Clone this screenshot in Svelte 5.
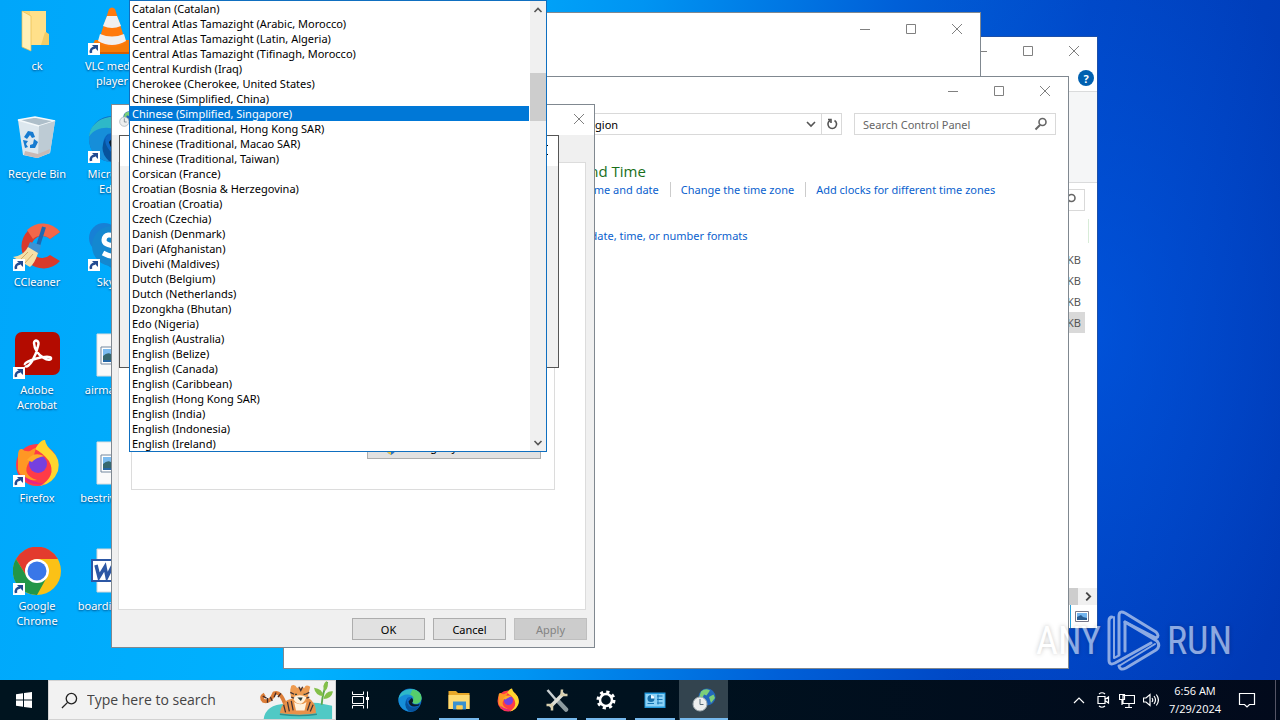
<script>
	const languages = [
		'Catalan (Catalan)',
		'Central Atlas Tamazight (Arabic, Morocco)',
		'Central Atlas Tamazight (Latin, Algeria)',
		'Central Atlas Tamazight (Tifinagh, Morocco)',
		'Central Kurdish (Iraq)',
		'Cherokee (Cherokee, United States)',
		'Chinese (Simplified, China)',
		'Chinese (Simplified, Singapore)',
		'Chinese (Traditional, Hong Kong SAR)',
		'Chinese (Traditional, Macao SAR)',
		'Chinese (Traditional, Taiwan)',
		'Corsican (France)',
		'Croatian (Bosnia & Herzegovina)',
		'Croatian (Croatia)',
		'Czech (Czechia)',
		'Danish (Denmark)',
		'Dari (Afghanistan)',
		'Divehi (Maldives)',
		'Dutch (Belgium)',
		'Dutch (Netherlands)',
		'Dzongkha (Bhutan)',
		'Edo (Nigeria)',
		'English (Australia)',
		'English (Belize)',
		'English (Canada)',
		'English (Caribbean)',
		'English (Hong Kong SAR)',
		'English (India)',
		'English (Indonesia)',
		'English (Ireland)',
	];

	// desktop columns, top to bottom
	const shortcuts = [
		{ icon: 'folder', label: 'ck' },
		{ icon: 'bin', label: 'Recycle Bin' },
		{ icon: 'ccleaner', label: 'CCleaner', link: true },
		{ icon: 'acrobat', label: 'Adobe Acrobat', link: true },
		{ icon: 'firefox', label: 'Firefox', link: true },
		{ icon: 'chrome', label: 'Google Chrome', link: true },
		{ icon: 'vlc', label: 'VLC media player', link: true },
		{ icon: 'edge', label: 'Microsoft Edge', link: true },
		{ icon: 'skype', label: 'Skype', link: true },
		{ icon: 'image', label: 'airmay.jpg' },
		{ icon: 'image', label: 'bestriver.jpg' },
		{ icon: 'word', label: 'boardinga.rtf' },
	];

	const tasks = [
		{ icon: 'taskview', label: 'Task View' },
		{ icon: 'edge', label: 'Microsoft Edge' },
		{ icon: 'explorer', label: 'File Explorer', open: true },
		{ icon: 'firefox', label: 'Firefox' },
		{ icon: 'tools', label: 'Tools', open: true },
		{ icon: 'gear', label: 'Settings', open: true },
		{ icon: 'panel', label: 'Control Panel', open: true },
		{ icon: 'region', label: 'Region', open: true, active: true },
	];

	const fileSizes = ['KB', 'KB', 'KB', 'KB'];

	let selected = $state('Chinese (Simplified, Singapore)');
	let panelSearch = $state('');
	let taskSearch = $state('');
</script>

{#snippet glyph(name)}
	<svg class="glyph" viewBox="0 0 48 48" aria-hidden="true">
		{#if name === 'folder'}
			<path d="M9 4H33V25L36 28V38H9Z" fill="#f8d775" />
			<path d="M17 4H33V38H17Z" fill="#ffe08a" />
			<path d="M32 25L36 27V38H28Z" fill="#f1cc66" />
			<path d="M9 4L18 9V44L9 40Z" fill="#fff0b8" stroke="#e6bb4d" stroke-width=".7" />
		{:else if name === 'bin'}
			<path d="M5 5L22 2L42 6L37 38L24 43L10 40Z" fill="#dce7ee" />
			<path d="M5 5L22 2L42 6L26 11Z" fill="#aebfca" stroke="#f5fafc" stroke-width="1.5" />
			<path d="M26 11L42 6L37 38L25 43Z" fill="#bdcbd4" />
			<path d="M12 36L25 39L37 34L36 38L24 43L11 40Z" fill="#c8b9b5" />
			<path d="M11 22L15 16L20 17L22 22L19 23L17 20L14 24Z" fill="#167bd0" />
			<path d="M21 24L25 27L22 33H17V30L20 29Z" fill="#167bd0" />
			<path d="M10 25L15 26L13 29L15 32L12 33Z" fill="#167bd0" />
		{:else if name === 'ccleaner'}
			<path d="M47 9A22 22 0 1 0 47 38L37 32A11 11 0 1 1 37 16Z" fill="#d93a2b" />
			<path d="M47 9A22 22 0 0 0 14 7L20 16A13 13 0 0 1 37 16Z" fill="#f26749" />
			<path d="M31 4L25 23" stroke="#1e68b1" stroke-width="4" />
			<path d="M17 19L28 22L26 31L14 26Z" fill="#3d92d4" />
			<path d="M15 24L25 30Q22 40 17 44L0 34Q10 33 15 24Z" fill="#f6dfa7" />
			<path d="M15 29L7 37M20 31L12 40" stroke="#d4ad66" />
		{:else if name === 'acrobat'}
			<rect x="2" y="1" width="45" height="43" rx="7" fill="#b30b00" />
			<path d="M12 34C10 30 36 23 38 27C39 32 22 26 21 12C21 8 27 9 25 15C23 25 16 38 12 35" fill="none" stroke="#fff" stroke-width="2.5" />
		{:else if name === 'firefox'}
			<circle cx="24" cy="26" r="21" fill="#ff3b47" />
			<path d="M22 10Q28 0 32 1Q33 7 39 12Q48 20 45 32Q40 45 27 47Q44 37 36 22Q30 14 22 10Z" fill="#ffd52e" />
			<path d="M5 17Q5 9 9 10Q12 13 17 12Q21 9 23 9L21 16L29 19Q22 24 16 23Q8 36 24 41Q9 43 5 31Z" fill="#ff9724" />
			<circle cx="25" cy="25" r="9" fill="#7540df" />
			<path d="M14 21Q21 12 31 17Q22 19 19 23Z" fill="#ffad29" />
			<path d="M8 35Q15 48 32 45Q18 43 8 35Z" fill="#e62386" />
		{:else if name === 'chrome'}
			<circle cx="24" cy="24" r="24" fill="#fbc116" />
			<path d="M3 12A24 24 0 0 1 45 12H24A12 12 0 0 0 14 30Z" fill="#e33b2e" />
			<path d="M3 12A24 24 0 0 0 24 48L34 30A12 12 0 0 1 14 30Z" fill="#229648" />
			<circle cx="24" cy="24" r="12" fill="#fff" />
			<circle cx="24" cy="24" r="9.5" fill="#3977e8" />
		{:else if name === 'vlc'}
			<path d="M7 33H42L47 45H1Z" fill="#f57b08" />
			<path d="M1 45H47V47H1Z" fill="#d65e00" />
			<path d="M21 2Q24-1 27 2L38 36Q24 44 10 36Z" fill="#ff7a0c" />
			<path d="M19 9H29L33 19Q24 23 15 19Z" fill="#f0f0f0" />
			<path d="M12 27Q24 32 36 27L38 34Q24 42 10 34Z" fill="#f0f0f0" />
		{:else if name === 'edge'}
			<circle cx="24" cy="24" r="23" fill="#0d69c5" />
			<path d="M1 22C3-4 47-5 47 20C47 30 35 35 29 29C38 20 20 8 1 22Z" fill="#2eb8c8" />
			<path d="M29 3Q47 6 47 20C47 30 35 35 29 29Q34 19 24 14Z" fill="#56ce6c" />
			<path d="M1 22C8 10 29 10 32 21C23 13 11 22 17 35Q22 46 38 43Q24 52 10 42Q0 34 1 22Z" fill="#168ed9" />
			<path d="M21 18Q13 25 22 36Q29 42 43 36Q34 52 21 46Q8 34 21 18Z" fill="#07539d" />
			<path d="M27 20Q33 24 28 30Q32 35 43 32L42 35Q24 42 21 27Z" fill="#0b1b2a" />
		{:else if name === 'skype'}
			<circle cx="16" cy="15" r="15" fill="#1780d5" />
			<circle cx="31" cy="31" r="16" fill="#078bd2" />
			<circle cx="24" cy="23" r="20" fill="#1488d0" />
			<path d="M31 15Q17 8 16 17C16 25 32 20 31 29Q28 37 15 30" fill="none" stroke="#fff" stroke-width="5" />
		{:else if name === 'image'}
			<path d="M9 3H40V45H9Z" fill="#fafafa" stroke="#ddd" />
			<path d="M13 16H36V33H13Z" fill="#fff" stroke="#73879d" />
			<path d="M15 18H34V31H15Z" fill="#7bbcf0" />
			<path d="M15 25Q21 19 26 26Q29 23 34 26V31H15Z" fill="#35686f" />
			<path d="M15 29H34V31H15Z" fill="#2466a5" />
		{:else if name === 'word'}
			<path d="M9 2H40V45H9Z" fill="#fff" stroke="#d6d6d6" />
			<path d="M4 13H27V34H4Z" fill="#fff" stroke="#2c57a4" stroke-width="2" />
			<path d="M8 18L11 30L17 20L19 30L25 18" fill="none" stroke="#2c57a4" stroke-width="3.5" />
			<path d="M29 17H37M29 23H37M29 29H37" stroke="#779ac8" />
		{:else if name === 'taskview'}
			<g fill="none" stroke="#fff" stroke-width="2">
				<path d="M7 7V13H29V7M7 41V35H29V41M7 17H29V31H7Z" />
				<path d="M37 7V41" />
			</g>
			<path d="M34 18H40V24H34Z" fill="#fff" />
		{:else if name === 'explorer'}
			<path d="M3 6H18L22 10H45V42H3Z" fill="#e8a829" />
			<path d="M3 14H45V42H3Z" fill="#ffdb72" />
			<path d="M12 27H38V43H31V35H19V43H12Z" fill="#3a91cf" />
			<path d="M19 35H31V43H19Z" fill="#ffcf50" />
		{:else if name === 'tools'}
			<path d="M5 4L24 26" stroke="#c8d0d2" stroke-width="5" />
			<path d="M26 26L42 43" stroke="#8d9b9f" stroke-width="9" stroke-linecap="round" />
			<path d="M10 38L38 10" stroke="#dedfd7" stroke-width="7" />
			<path d="M34 3L33 14L45 14M3 34L14 34L14 45" fill="none" stroke="#d8cfae" stroke-width="5" />
		{:else if name === 'gear'}
			<circle cx="24" cy="24" r="16" fill="none" stroke="#fff" stroke-width="6" stroke-dasharray="6.3 6.27" />
			<circle cx="24" cy="24" r="12" fill="none" stroke="#fff" stroke-width="5" />
		{:else if name === 'panel'}
			<path d="M3 9H45V40H3Z" fill="#2299dc" />
			<path d="M5 12H43V37H5Z" fill="#8dd2f6" />
			<circle cx="16" cy="21" r="7" fill="#176ea7" />
			<path d="M16 21V14A7 7 0 0 1 23 21Z" fill="#f5fbff" />
			<path d="M28 16H39M28 23H39M28 30H39M30 13V33M9 31H22" stroke="#1274b4" stroke-width="2" />
		{:else if name === 'region'}
			<circle cx="30" cy="18" r="17" fill="#2367ba" />
			<path d="M18 7Q27-1 36 5L29 15L24 13L20 22L14 19ZM34 18L43 13L46 20L38 30Z" fill="#7ccf79" />
			<circle cx="16" cy="32" r="14" fill="#eceeee" stroke="#9fa9af" stroke-width="2" />
			<path d="M16 22V33H23" fill="none" stroke="#596c79" stroke-width="2" />
		{/if}
	</svg>
{/snippet}

{#snippet magnifier()}
	<svg class="magnifier" viewBox="0 0 14 14" aria-hidden="true">
		<circle cx="8.5" cy="5" r="3.5" fill="none" stroke="currentColor" stroke-width="1.6" />
		<path d="M6 8L1.5 12.5" stroke="currentColor" stroke-width="2" />
	</svg>
{/snippet}

{#snippet caption(closeOnly)}
	<div class="caption">
		{#if !closeOnly}
			<button aria-label="Minimize"><svg viewBox="0 0 12 12"><path d="M1 6.5H11" /></svg></button>
			<button aria-label="Maximize"><svg viewBox="0 0 12 12"><path d="M1.5 1.5H10.5V10.5H1.5Z" /></svg></button>
		{/if}
		<button aria-label="Close"><svg viewBox="0 0 12 12"><path d="M1 1L11 11M11 1L1 11" /></svg></button>
	</div>
{/snippet}

<div class="screen">
	<main class="desktop">
		<div class="shortcuts">
			{#each shortcuts as item}
				<button class="shortcut">
					<span class="picture">
						{@render glyph(item.icon)}
						{#if item.link}
							<svg class="arrow" viewBox="0 0 12 12" aria-hidden="true">
								<path d="M0 0H12V12H0Z" fill="#fff" />
								<path d="M3 10Q2 5 7 4.5" fill="none" stroke="#234b91" stroke-width="2.5" />
								<path d="M4 2H10V8Z" fill="#234b91" />
							</svg>
						{/if}
					</span>
					<span>{item.label}</span>
				</button>
			{/each}
		</div>

		<section class="window explorer" aria-label="File Explorer">
			{@render caption(false)}
			<div class="ribbon-tabs">
				<button class="help" aria-label="Help">?</button>
			</div>
			<div class="ribbon"></div>
			<div class="explorer-search">
				<div class="field">{@render magnifier()}</div>
			</div>
			<div class="column-edge"></div>
			<table>
				<tbody>
					{#each fileSizes as size, i}
						<tr class:chosen={i === 3}><td>{size}</td></tr>
					{/each}
				</tbody>
			</table>
			<div class="hscroll">
				<div class="hthumb"></div>
				<svg viewBox="0 0 8 8" aria-hidden="true"><path d="M2 0.5L5.5 4L2 7.5" /></svg>
			</div>
			<div class="status">
				<button aria-label="Large icons">
					<svg viewBox="0 0 14 11" aria-hidden="true">
						<path d="M.5 .5H13.5V10.5H.5Z" fill="#fff" stroke="#778" />
						<path d="M2 2H12V9H2Z" fill="#72b4ee" />
						<path d="M2 6L6 4L8 6L12 7V9H2Z" fill="#285b90" />
					</svg>
				</button>
			</div>
		</section>

		<section class="window document" aria-label="Document">
			{@render caption(false)}
		</section>

		<section class="window panel" aria-label="Clock and Region">
			{@render caption(false)}
			<div class="address">
				<nav class="field crumbs" aria-label="Address">
					<span>Clock and Region</span>
					<button aria-label="Previous locations">
						<svg class="line" viewBox="0 0 12 12"><path d="M2 4L6 8L10 4" /></svg>
					</button>
					<button class="refresh" aria-label="Refresh">
						<svg class="line" viewBox="0 0 12 12"><path d="M4 2.5A4.3 4.3 0 1 0 8.5 2.5M2 1.5H5V5" /></svg>
					</button>
				</nav>
				<label class="field search">
					<input aria-label="Search Control Panel" placeholder="Search Control Panel" bind:value={panelSearch} />
					{@render magnifier()}
				</label>
			</div>
			<div class="links">
				<h2>Date and Time</h2>
				<div class="row">
					<a href="#time">Set the time and date</a>
					<a href="#zone">Change the time zone</a>
					<a href="#clocks">Add clocks for different time zones</a>
				</div>
				<div class="row region-row">
					<a href="#formats">Change date, time, or number formats</a>
				</div>
			</div>
		</section>

		<section class="window region" aria-label="Region">
			<header>
				<span class="title-icon">{@render glyph('region')}</span>
				{@render caption(true)}
			</header>
			<div class="page">
				<div class="group">
					<button class="push locale">
						<svg viewBox="0 0 14 16" aria-hidden="true">
							<path d="M7 0L13 3V8Q12 13 7 16Q2 13 1 8V3Z" fill="#2f75c2" />
							<path d="M7 0L13 3V8H7Z" fill="#f3c83c" />
							<path d="M1 8H7V16Q2 13 1 8Z" fill="#f3c83c" />
						</svg>
						Change system locale...
					</button>
				</div>
			</div>
			<footer>
				<button class="push">OK</button>
				<button class="push">Cancel</button>
				<button class="push" disabled>Apply</button>
			</footer>
		</section>

		<section class="window settings" aria-label="Region Settings">
			<header>{@render caption(true)}</header>
		</section>

		<div class="popup">
			<select size="30" aria-label="Current system locale" bind:value={selected}>
				{#each languages as language}
					<option value={language}>{language}</option>
				{/each}
			</select>
			<div class="scrollbar">
				<svg class="line" viewBox="0 0 12 12" aria-hidden="true"><path d="M2.5 8L6 4.5L9.5 8" /></svg>
				<div class="track"><div class="thumb"></div></div>
				<svg class="line" viewBox="0 0 12 12" aria-hidden="true"><path d="M2.5 4L6 7.5L9.5 4" /></svg>
			</div>
		</div>

		<div class="watermark">
			<span>ANY</span>
			<svg viewBox="0 0 54 62" aria-hidden="true">
				<g fill="none" stroke="#fff" stroke-linejoin="round" stroke-linecap="round">
					<path d="M5 7Q2 7 2 11V50Q2 56 8 53L44 33" stroke-width="3" />
					<path d="M7 7V48L11 46" stroke-width="2" />
					<path d="M12 45V6Q12 0 18 3L49 22Q53 26 49 28L18 12V41" stroke-width="3" />
					<path d="M12 56Q13 61 19 58L49 40Q54 36 50 31L18 12" stroke-width="3" />
					<path d="M12 56L48 34" stroke-width="2" />
				</g>
			</svg>
			<span>RUN</span>
		</div>
	</main>

	<footer class="taskbar">
		<button class="start" aria-label="Start">
			<svg viewBox="0 0 16 16"><path d="M0 2.3L7 1.3V7.5H0ZM8 1.1L16 0V7.5H8ZM0 8.5H7V14.7L0 13.7ZM8 8.5H16V16L8 14.9Z" fill="#fff" /></svg>
		</button>
		<label class="task-search">
			<svg class="lens" viewBox="0 0 18 18" aria-hidden="true">
				<circle cx="11" cy="7" r="5.5" /><path d="M7 11L1 17" />
			</svg>
			<input aria-label="Type here to search" placeholder="Type here to search" bind:value={taskSearch} />
			<svg class="tiger" viewBox="0 0 78 40" aria-hidden="true">
				<path d="M5 40Q7 25 28 24Q53 20 77 26V40Z" fill="#50c9c5" />
				<path d="M66 25Q67 12 72 1" fill="none" stroke="#5da84c" stroke-width="2" />
				<path d="M68 16Q59 15 58 7Q67 8 68 16ZM69 11Q66 4 71 0Q75 6 69 11ZM68 19Q70 10 78 11Q76 19 68 19Z" fill="#83bf49" />
				<path d="M28 26Q23 10 16 13Q12 23 5 21Q1 17 6 14" fill="none" stroke="#db7d38" stroke-width="4" />
				<path d="M23 13L20 17M18 12L16 17M12 17L14 21M9 18L9 23M4 16L8 18" stroke="#432b27" stroke-width="1.4" />
				<path d="M22 34Q25 17 39 19L52 18Q60 22 60 34Q44 37 22 34Z" fill="#e89149" />
				<path d="M33 9L34 5Q38 3 40 7L48 7Q49 3 54 6L52 14Q52 23 44 24Q33 23 33 12Z" fill="#ed9b50" />
				<path d="M36 17Q43 13 50 17Q47 24 43 24Q37 23 36 17Z" fill="#fff2df" />
				<path d="M37 22Q44 27 50 22L48 31H39Z" fill="#fff2df" />
				<path d="M42 6L44 10L46 6M33 12L37 14M53 12L49 14M34 17L37 18M53 17L50 18M26 25L28 33M30 22L32 32M34 21L36 31M54 22L51 31M57 25L54 32" fill="none" stroke="#403335" stroke-width="1.3" />
				<path d="M38 14H40M47 14H49M42 18H45L44 20Z" stroke="#263c3b" stroke-width="1.3" />
				<path d="M22 35Q43 38 61 35" fill="none" stroke="#2d8d8e" stroke-width="1.4" />
			</svg>
		</label>
		<nav class="tasks" aria-label="Running programs">
			{#each tasks as task}
				<button class:open={task.open} class:active={task.active} aria-label={task.label}>{@render glyph(task.icon)}</button>
			{/each}
		</nav>
		<div class="tray">
			<svg viewBox="0 0 16 16" aria-hidden="true"><path d="M3 11L8 6L13 11" /></svg>
			<svg viewBox="0 0 16 16" aria-hidden="true"><path d="M3 4.5H10V11.5H3ZM10 7.5L13.5 5V11L10 8.5M4 2Q7-.5 10 2M4 14Q7 16.5 10 14" /></svg>
			<svg viewBox="0 0 16 16" aria-hidden="true"><path d="M4 3.5H15.5V11.5H4ZM10 12V15M6 15.5H13M.5 2.5H5.5V7.5H.5ZM3 7.5V13" /></svg>
			<svg viewBox="0 0 16 16" aria-hidden="true"><path d="M.5 6H3L7 2.5V13.5L3 10H.5ZM9 6Q10.5 8 9 10M11 4Q14 8 11 12M13.3 2.5Q17.5 8 13.3 13.5" /></svg>
			<time>6:56 AM<br />7/29/2024</time>
			<svg class="notice" viewBox="0 0 18 18" aria-hidden="true"><path d="M1.5 2.5H16.5V13.5H11.5L9 16L6.5 13.5H1.5Z" /></svg>
		</div>
	</footer>
</div>

<style>
	:global(body) {
		margin: 0;
	}

	.screen {
		display: flex;
		flex-direction: column;
		height: 100vh;
		overflow: hidden;
		font-family: 'Noto Sans', 'Open Sans', sans-serif;
		font-size: 11px;
		line-height: 15px;
		color: #000;
	}

	.screen * {
		box-sizing: border-box;
	}

	button,
	input,
	select {
		margin: 0;
		padding: 0;
		border: 0;
		border-radius: 0;
		background: none;
		font: inherit;
		color: inherit;
	}

	svg {
		display: block;
		flex: none;
	}

	.desktop {
		position: relative;
		flex: 1;
		min-height: 0;
		overflow: hidden;
		background:
			radial-gradient(ellipse 260px 420px at 1090px 330px, rgba(0, 96, 240, 0.5), transparent),
			linear-gradient(100deg, #00a6fa 0%, #00b2ff 30%, #0094f2 46%, #0060d8 64%, #0046c4 78%, #0038b4 100%);
	}

	.shortcuts {
		display: grid;
		grid-template-rows: repeat(6, 108px);
		grid-auto-columns: 75px;
		grid-auto-flow: column;
		width: 150px;
	}

	.shortcut {
		display: flex;
		flex-direction: column;
		align-items: center;
		gap: 2px;
		padding: 7px 4px 0 3px;
		color: #fff;
		text-shadow: 0 1px 2px rgba(0, 40, 90, 0.8);
	}

	.picture {
		position: relative;
		width: 48px;
		height: 48px;
		margin-bottom: 1px;
	}

	.arrow {
		position: absolute;
		left: 0;
		bottom: 0;
		width: 12px;
		height: 12px;
	}

	.glyph {
		width: 100%;
		height: 100%;
	}

	.window {
		position: absolute;
		display: flex;
		flex-direction: column;
		border: 1px solid #808890;
		background: #fff;
	}

	.caption {
		display: flex;
		justify-content: flex-end;
		height: 28px;
		color: #808080;
	}

	.caption button {
		display: grid;
		place-items: center;
		width: 46px;
	}

	.caption svg {
		width: 12px;
		height: 12px;
		fill: none;
		stroke: currentColor;
	}

	.explorer {
		left: 400px;
		top: 36px;
		width: 698px;
		height: 593px;
		border-color: #1c4fa8;
	}

	.ribbon-tabs {
		display: flex;
		justify-content: flex-end;
		height: 26px;
		padding: 5px 3px 0 0;
	}

	.help {
		width: 16px;
		height: 16px;
		border-radius: 50%;
		background: #0060b0;
		color: #fff;
		font-weight: 700;
	}

	.ribbon {
		height: 92px;
		border: solid #dadbdc;
		border-width: 1px 0;
		background: #f5f6f7;
	}

	.explorer-search {
		padding: 6px 12px 8px 0;
	}

	.explorer-search .field {
		justify-content: flex-end;
		padding-right: 7px;
	}

	.field {
		display: flex;
		align-items: center;
		height: 22px;
		border: 1px solid #d9d9d9;
		color: #666;
	}

	.magnifier {
		width: 14px;
		height: 14px;
	}

	.column-edge {
		height: 24px;
		margin-right: 8px;
		border-right: 1px solid #d8ecd8;
	}

	table {
		margin: 6px 12px 0 0;
		border-spacing: 0;
		color: #555;
	}

	td {
		height: 21px;
		padding: 0 4px 0 0;
		text-align: right;
	}

	.chosen {
		background: #d9d9d9;
	}

	.hscroll {
		display: flex;
		align-items: center;
		justify-content: flex-end;
		gap: 6px;
		height: 17px;
		margin-top: auto;
		padding-right: 4px;
		background: #f0f0f0;
	}

	.hscroll svg {
		width: 9px;
		height: 9px;
		fill: none;
		stroke: #444;
		stroke-width: 1.6;
	}

	.hthumb {
		flex: 1;
		height: 17px;
		background: #cdcdcd;
	}

	.status {
		display: flex;
		justify-content: flex-end;
		height: 23px;
	}

	.status button {
		width: 27px;
		padding-left: 4px;
		border-left: 1px solid #26a0da;
	}

	.status svg {
		width: 14px;
		height: 11px;
	}

	.document {
		left: 320px;
		top: 12px;
		width: 661px;
		height: 600px;
	}

	.document .caption {
		height: 32px;
	}

	.panel {
		left: 283px;
		top: 76px;
		width: 786px;
		height: 593px;
	}

	.address {
		display: flex;
		gap: 12px;
		padding: 8px 12px 0 114px;
	}

	.crumbs {
		flex: 1;
	}

	.crumbs span {
		flex: 1;
		padding-left: 130px;
		color: #000;
	}

	.crumbs button {
		display: grid;
		place-items: center;
		width: 20px;
		height: 20px;
	}

	.crumbs .refresh {
		border-left: 1px solid #d9d9d9;
	}

	.line {
		width: 12px;
		height: 12px;
		fill: none;
		stroke: #555;
		stroke-width: 1.6;
	}

	.search {
		width: 202px;
		padding: 0 7px 0 8px;
	}

	.search input {
		flex: 1;
		min-width: 0;
		outline: 0;
	}

	input::placeholder {
		color: #666;
		opacity: 1;
	}

	.links {
		padding: 26px 0 0 260px;
	}

	h2 {
		margin: 0;
		font-family: 'Open Sans', sans-serif;
		font-size: 15px;
		font-weight: 400;
		line-height: 21px;
		color: #1a6f1a;
	}

	.row {
		display: flex;
		padding-left: 4px;
	}

	.row a {
		color: #0a5fce;
		text-decoration: none;
	}

	.row a + a {
		margin-left: 11px;
		padding-left: 10px;
		border-left: 1px solid #ccc;
	}

	.region-row {
		margin-top: 31px;
	}

	.region {
		left: 111px;
		top: 104px;
		width: 484px;
		height: 544px;
		background: #f0f0f0;
	}

	header {
		display: flex;
		justify-content: space-between;
		height: 30px;
		background: #fff;
	}

	header .caption button {
		width: 31px;
	}

	.title-icon {
		width: 16px;
		height: 16px;
		margin: 6px 0 0 7px;
	}

	.page {
		display: flex;
		flex: 1;
		margin: 27px 8px 0 6px;
		border: 1px solid #dcdcdc;
		background: #fff;
	}

	.group {
		display: flex;
		flex: 1;
		align-items: flex-end;
		justify-content: flex-end;
		margin: 12px 30px 119px 12px;
		padding: 0 13px 30px 0;
		border: 1px solid #dcdcdc;
	}

	.region > footer {
		display: flex;
		justify-content: flex-end;
		gap: 8px;
		padding: 8px 7px 7px;
	}

	.push {
		width: 73px;
		height: 22px;
		border: 1px solid #adadad;
		background: #e1e1e1;
	}

	.push:disabled {
		background: #ccc;
		border-color: #bfbfbf;
		color: #838383;
	}

	.locale {
		display: flex;
		align-items: center;
		justify-content: center;
		gap: 6px;
		width: 174px;
		padding-bottom: 3px;
	}

	.locale svg {
		width: 14px;
		height: 16px;
	}

	.settings {
		left: 119px;
		top: 135px;
		width: 440px;
		height: 233px;
		border-color: #555;
		background: #f0f0f0;
	}

	.settings header {
		justify-content: flex-end;
	}

	.settings .caption {
		color: #000;
	}

	.popup {
		position: absolute;
		left: 129px;
		top: 0;
		display: flex;
		width: 418px;
		border: 1px solid #0f6fc0;
		background: #fff;
	}

	select {
		flex: 1;
		height: 450px;
		overflow: hidden;
		scrollbar-width: none;
		outline: 0;
	}

	option {
		min-height: 15px;
		height: 15px;
		padding: 0 0 0 2px;
		line-height: 15px;
		color: #000;
	}

	option:checked {
		background: #0078d7 linear-gradient(#0078d7, #0078d7);
		color: #fff;
	}

	.scrollbar {
		display: flex;
		flex-direction: column;
		align-items: center;
		width: 17px;
		padding: 3px 0 2px;
		border-left: 1px solid #fff;
		background: #f0f0f0;
	}

	.track {
		flex: 1;
		width: 16px;
		padding-top: 57px;
	}

	.thumb {
		height: 48px;
		background: #cdcdcd;
	}

	.watermark {
		position: absolute;
		right: 48px;
		bottom: 8px;
		display: flex;
		align-items: center;
		gap: 6px;
		font-family: 'Roboto Condensed', 'Liberation Sans Narrow', Roboto, sans-serif;
		font-size: 38px;
		line-height: 62px;
		font-weight: 400;
		color: #fff;
		opacity: 0.55;
		text-shadow: 0 0 4px rgba(0, 0, 0, 0.4);
	}

	.watermark svg {
		width: 54px;
		height: 62px;
	}

	.taskbar {
		display: flex;
		height: 40px;
		background: linear-gradient(90deg, #00141f, #00121f 50%, #020a1c);
		color: #fff;
	}

	.start {
		display: grid;
		place-items: center;
		width: 48px;
	}

	.start svg {
		width: 16px;
		height: 16px;
	}

	.task-search {
		display: flex;
		align-items: center;
		width: 288px;
		padding-left: 12px;
		border: 1px solid #d2d2d2;
		background: #f2f2f2;
	}

	.lens {
		width: 17px;
		height: 17px;
		fill: none;
		stroke: #222;
		stroke-width: 1.4;
	}

	.task-search input {
		flex: 1;
		min-width: 0;
		padding-left: 9px;
		outline: 0;
		font-family: 'Open Sans', sans-serif;
		font-size: 14px;
		line-height: 20px;
	}

	.task-search input::placeholder {
		color: #444;
	}

	.tiger {
		width: 78px;
		height: 38px;
	}

	.tasks {
		display: flex;
	}

	.tasks button {
		display: grid;
		place-items: center;
		width: 49px;
	}

	.tasks .glyph {
		width: 24px;
		height: 24px;
	}

	.tasks .open {
		background: linear-gradient(#76b9ed, #76b9ed) center bottom / 40px 2px no-repeat;
	}

	.tasks .active {
		background: linear-gradient(#76b9ed, #76b9ed) center bottom / 48px 2px no-repeat #33444f;
	}

	.tray {
		display: flex;
		align-items: center;
		gap: 8px;
		margin-left: auto;
		margin-right: 4px;
		padding-right: 19px;
		border-right: 1px solid #556;
	}

	.tray svg {
		width: 16px;
		height: 16px;
		fill: none;
		stroke: #fff;
		stroke-width: 1.2;
	}

	.tray time {
		width: 56px;
		margin-right: 7px;
		font-family: 'Open Sans', sans-serif;
		line-height: 18px;
		text-align: center;
	}

	.tray .notice {
		width: 18px;
		height: 18px;
	}
</style>
